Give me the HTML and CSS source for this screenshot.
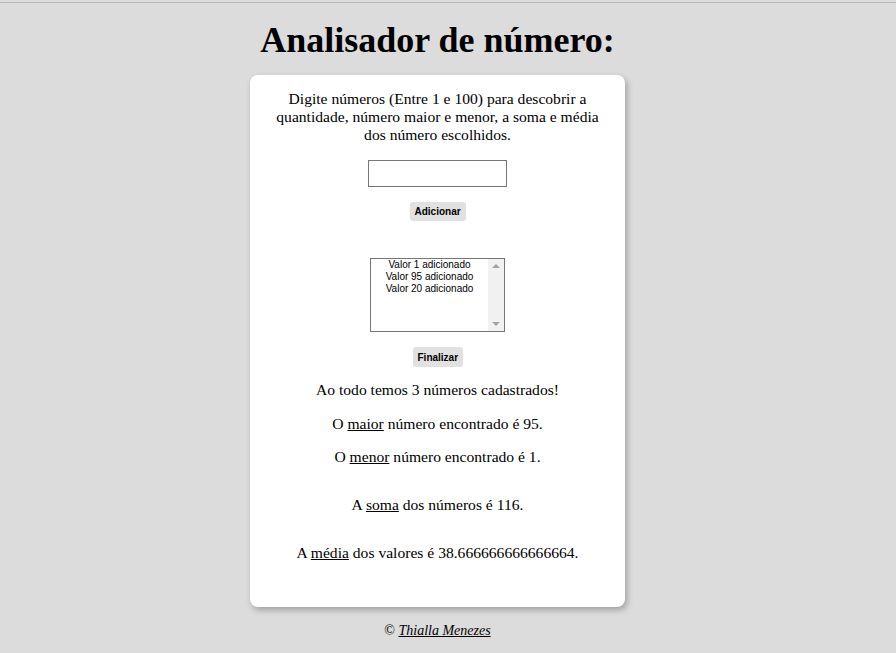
FILE: index.html
```html
<!DOCTYPE html>
<html lang="pt-BR">
<head>
<meta charset="utf-8">
<title>Analisador de número</title>
<link rel="stylesheet" href="styles.css">
</head>
<body>
<div class="topline"></div>
<div class="page">
  <h1 class="title">Analisador de número:</h1>
  <section class="card">
    <p class="intro">Digite números (Entre 1 e 100) para descobrir a quantidade, número maior e menor, a soma e média dos número escolhidos.</p>
    <input class="num" type="text">
    <button class="btn btn-add">Adicionar</button>
    <div class="list">
      <div class="list-items">
        <div class="item">Valor 1 adicionado</div>
        <div class="item">Valor 95 adicionado</div>
        <div class="item">Valor 20 adicionado</div>
      </div>
      <div class="scroll">
        <span class="arrow up"></span>
        <span class="arrow down"></span>
      </div>
    </div>
    <button class="btn btn-end">Finalizar</button>
    <div class="results">
      <p class="res">Ao todo temos 3 números cadastrados!</p>
      <p class="res">O <u>maior</u> número encontrado é 95.</p>
      <p class="res">O <u>menor</u> número encontrado é 1.</p>
      <p class="res res-gap">A <u>soma</u> dos números é 116.</p>
      <p class="res res-gap">A <u>média</u> dos valores é 38.666666666666664.</p>
    </div>
  </section>
  <footer class="footer">© <a class="author" href="#">Thialla Menezes</a></footer>
</div>
</body>
</html>
```
FILE: styles.css
```css
html, body {
  margin: 0;
  padding: 0;
}
body {
  background: #dcdcdc;
  font-family: "Liberation Serif", "Times New Roman", serif;
  font-size: 15.6px;
  color: #000;
  height: 653px;
  overflow: hidden;
}
.topline {
  height: 2px;
  border-bottom: 1px solid #b9b9b9;
  background: #dcdcdc;
}
.page {
  width: 875px;
  display: flex;
  flex-direction: column;
  align-items: center;
}
.title {
  font-size: 36px;
  font-weight: bold;
  line-height: 41px;
  margin: 17px 0 14px;
}
.card {
  width: 375px;
  box-sizing: border-box;
  background: #fff;
  border-radius: 8px;
  box-shadow: 2px 3px 6px rgba(0, 0, 0, 0.28);
  padding: 15px 20px 45px;
  display: flex;
  flex-direction: column;
  align-items: center;
  text-align: center;
}
.intro {
  margin: 0;
  line-height: 18px;
}
.num {
  margin-top: 16px;
  width: 139px;
  height: 27px;
  box-sizing: border-box;
  border: 1px solid #767676;
  border-radius: 0;
  padding: 0;
}
.btn {
  font-family: "Liberation Sans", Arial, sans-serif;
  font-size: 10px;
  font-weight: bold;
  line-height: 13px;
  color: #000;
  background: #e1e1e1;
  border: none;
  border-radius: 3px;
  padding: 3px 5px;
  height: 19px;
}
.btn-add {
  margin-top: 15px;
  width: 56px;
}
.btn-end {
  margin-top: 15px;
  width: 50px;
  height: 20px;
}
.list {
  margin-top: 37px;
  width: 135px;
  height: 74px;
  box-sizing: border-box;
  border: 1px solid #767676;
  display: flex;
  background: #fff;
}
.list-items {
  flex: 1;
  font-family: "Liberation Sans", Arial, sans-serif;
  font-size: 10px;
  line-height: 12px;
  text-align: center;
}
.scroll {
  width: 16px;
  background: #f1f1f1;
  display: flex;
  flex-direction: column;
  justify-content: space-between;
  align-items: center;
  padding: 5px 0;
}
.arrow {
  width: 0;
  height: 0;
  border-left: 4px solid transparent;
  border-right: 4px solid transparent;
}
.arrow.up {
  border-bottom: 4px solid #a3a3a3;
}
.arrow.down {
  border-top: 4px solid #a3a3a3;
}
.results {
  margin-top: 14px;
}
.res {
  margin: 0 0 15.5px;
  line-height: 18px;
}
.res:last-child {
  margin-bottom: 0;
}
.res-gap {
  margin-top: 30px;
}
.footer {
  margin-top: 16px;
  font-size: 14px;
  line-height: 16px;
}
.author {
  color: #000;
  font-style: italic;
}
```
